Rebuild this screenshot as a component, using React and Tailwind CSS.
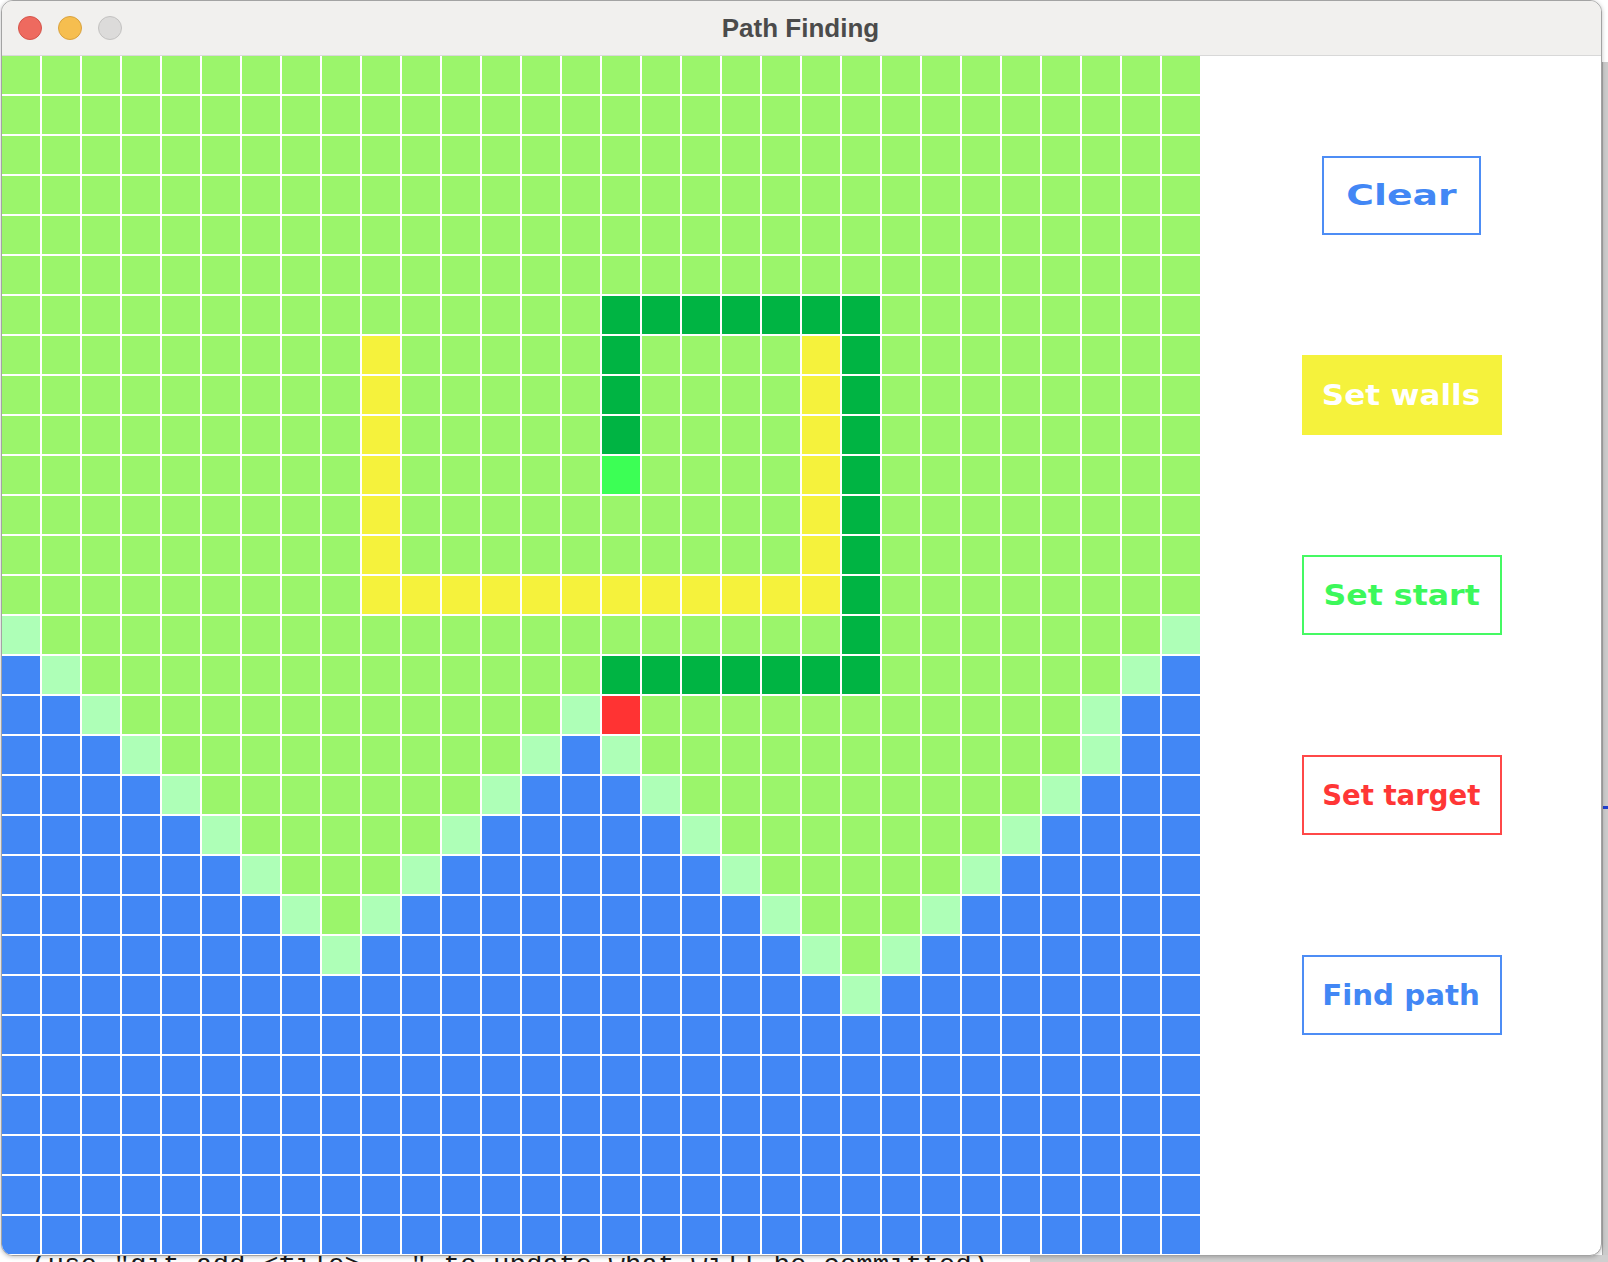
import React from "react";

const COLS = 30;

function buildGrid() {
  const g = [];
  for (let r = 0; r < 30; r++) g.push(Array(COLS).fill("g"));
  // dark green walls
  for (let c = 15; c <= 21; c++) { g[6][c] = "D"; g[15][c] = "D"; }
  for (let r = 7; r <= 9; r++) g[r][15] = "D";
  for (let r = 6; r <= 15; r++) g[r][21] = "D";
  // yellow walls
  for (let r = 7; r <= 13; r++) { g[r][9] = "Y"; g[r][20] = "Y"; }
  for (let c = 9; c <= 20; c++) g[13][c] = "Y";
  g[10][15] = "S";
  const lower = {
    14: "PggggggggggggggggggggDgggggggP",
    15: "BPgggggggggggggDDDDDDDggggggPB",
    16: "BBPgggggggggggPTgggggggggggPBB",
    17: "BBBPgggggggggPBPgggggggggggPBB",
    18: "BBBBPgggggggPBBBPgggggggggPBBB",
    19: "BBBBBPgggggPBBBBBPgggggggPBBBB",
    20: "BBBBBBPgggPBBBBBBBPgggggPBBBBB",
    21: "BBBBBBBPgPBBBBBBBBBPgggPBBBBBB",
    22: "BBBBBBBBPBBBBBBBBBBBPgPBBBBBBB",
    23: "BBBBBBBBBBBBBBBBBBBBBPBBBBBBBB",
  };
  for (let r = 14; r < 30; r++) {
    const s = lower[r] || "B".repeat(30);
    g[r] = s.split("");
  }
  return g;
}

const COLOR = {
  g: "bg-[#9bf56b]",
  P: "bg-[#aeffb7]",
  B: "bg-[#4287f5]",
  D: "bg-[#00b443]",
  Y: "bg-[#f5f23c]",
  S: "bg-[#3cff55]",
  T: "bg-[#ff3333]",
};

function Grid() {
  const grid = buildGrid();
  return (
    <div className="grid grid-cols-[repeat(30,38px)] auto-rows-[38px] gap-[2px] bg-white w-[1198px] shrink-0">
      {grid.flat().map((t, i) => (
        <div key={i} className={COLOR[t]} />
      ))}
    </div>
  );
}

function Btn({ children, box, text, scale }) {
  return (
    <div className={"flex items-center justify-center shrink-0 " + box}>
      <span
        className={
          "inline-block font-['DejaVu_Sans',sans-serif] font-bold text-[29px] leading-none whitespace-nowrap " +
          text + " " + scale
        }
      >
        {children}
      </span>
    </div>
  );
}

export default function App() {
  return (
    <div className="relative w-[1608px] h-[1262px] overflow-hidden bg-white">
      {/* background content behind the window */}
      <div className="absolute left-[1602px] top-[62px] w-[6px] h-[1200px] bg-[#cbcbcb] border-l border-[#a9a9a9]" />
      <div className="absolute left-[1603px] top-[806px] w-[5px] h-[3px] bg-[#1f3fd0]" />
      <div className="absolute left-[1030px] top-[1255px] w-[578px] h-[7px] bg-[#cfcfcf]" />
      <div className="absolute left-[31px] top-[1252px] font-['Liberation_Mono',monospace] text-[27.5px] leading-[28px] text-[#1a1a1a] whitespace-pre">
        (use "git add &lt;file&gt;..." to update what will be committed)
      </div>

      {/* window */}
      <div className="relative ml-[1px] w-[1601px] h-[1256px] rounded-[12px] border border-[#a3a3a3] overflow-hidden bg-white flex flex-col shadow-[0_1px_4px_rgba(0,0,0,0.25)]">
        <div className="h-[55px] shrink-0 bg-[#f1f0ee] border-b border-[#d8d8d8] grid grid-cols-[1fr_auto_1fr] items-center">
          <div className="flex items-center gap-[16px] pl-[16px]">
            <div className="w-[24px] h-[24px] rounded-full bg-[#ee6a5f] border border-[#d5544a]" />
            <div className="w-[24px] h-[24px] rounded-full bg-[#f6be4f] border border-[#d9a23e]" />
            <div className="w-[24px] h-[24px] rounded-full bg-[#dcdbda] border border-[#c3c2c1]" />
          </div>
          <div className="font-['Liberation_Sans',Arial,sans-serif] font-bold text-[26px] text-[#4b4b4b] leading-none -ml-[2px]">
            Path Finding
          </div>
          <div />
        </div>
        <div className="flex flex-1 min-h-0">
          <Grid />
          <div className="flex-1 flex flex-col items-center pt-[100px] gap-[120px] pl-[2px]">
            <Btn box="w-[159px] h-[79px] border-2 border-[#4d8df5]" text="text-[#4287f5]" scale="scale-x-[1.3]">
              Clear
            </Btn>
            <Btn box="w-[200px] h-[80px] bg-[#f5f23c]" text="text-white" scale="scale-x-[1.07]">
              Set walls
            </Btn>
            <Btn box="w-[200px] h-[80px] border-2 border-[#45f963]" text="text-[#3cf85a]" scale="scale-x-[1.09]">
              Set start
            </Btn>
            <Btn box="w-[200px] h-[80px] border-2 border-[#ff4848]" text="text-[#ff3636]" scale="scale-x-[0.95]">
              Set target
            </Btn>
            <Btn box="w-[200px] h-[80px] border-2 border-[#4d8df5]" text="text-[#4287f5]" scale="scale-x-[1.01]">
              Find path
            </Btn>
          </div>
        </div>
      </div>
    </div>
  );
}
